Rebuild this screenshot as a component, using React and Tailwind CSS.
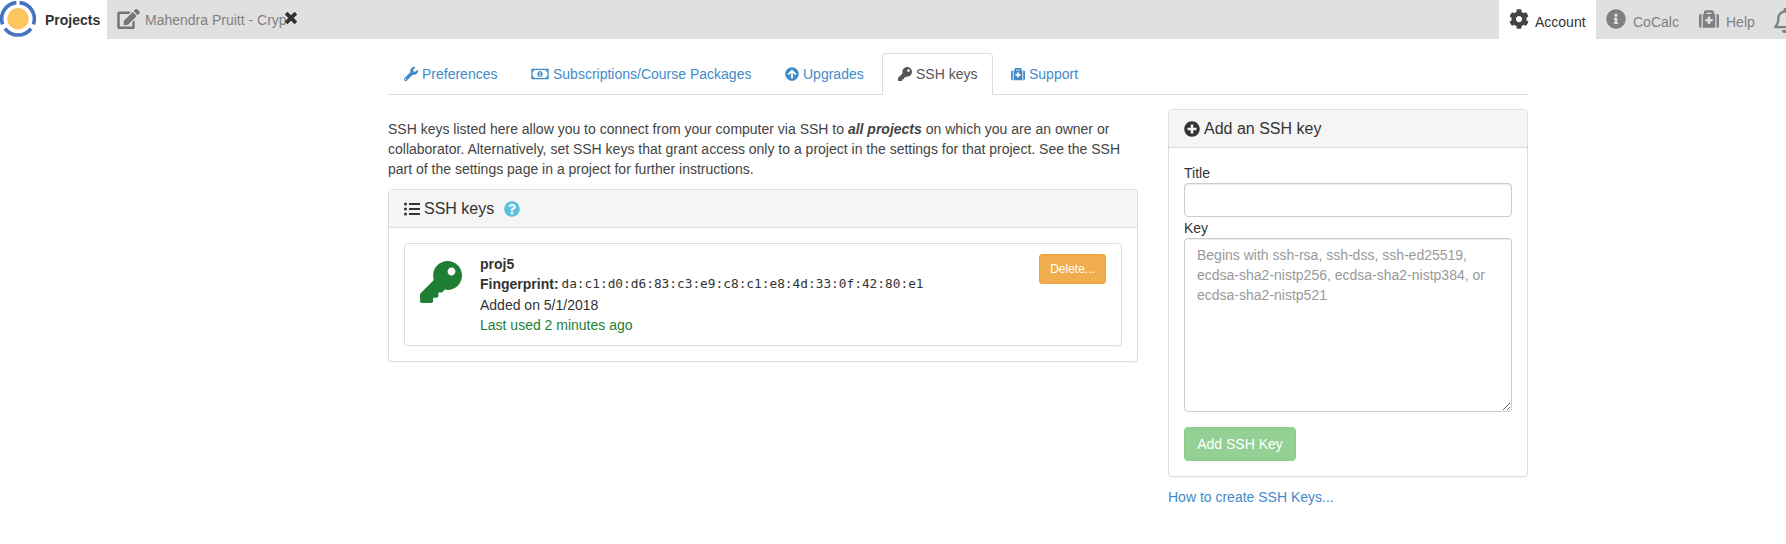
import React from "react";
import {
  FaEdit,
  FaCog,
  FaInfoCircle,
  FaMedkit,
  FaRegBell,
  FaWrench,
  FaRegMoneyBillAlt,
  FaArrowCircleUp,
  FaKey,
  FaListUl,
  FaQuestionCircle,
  FaPlusCircle,
} from "react-icons/fa";

function Logo() {
  return (
    <svg className="block h-[37px] w-9 shrink-0" viewBox="0 0 36 37">
      <circle cx="18" cy="18.8" r="10.7" fill="#fcc65f" />
      <g fill="none" stroke="#4474c0" strokeWidth="3.6">
        <path d="M2.6 24.3 A16.3 16.3 0 0 1 16.4 2.6" />
        <path d="M19.6 2.6 A16.3 16.3 0 0 1 33.4 24.3" />
        <path d="M5 28.6 A16.3 16.3 0 0 0 31 28.6" />
      </g>
    </svg>
  );
}

function CloseIcon() {
  return (
    <svg className="-ml-px mt-3 block h-3 w-3 shrink-0 self-start fill-[#333]" viewBox="0 64 384 384">
      <path d="M323.1 441l53.9-53.9c9.4-9.4 9.4-24.5 0-33.9L279.8 256l97.2-97.2c9.4-9.4 9.4-24.5 0-33.9L323.1 71c-9.4-9.4-24.5-9.4-33.9 0L192 168.2 94.8 71c-9.4-9.4-24.5-9.4-33.9 0L7 124.9c-9.4 9.4-9.4 24.5 0 33.9l97.2 97.2L7 353.2c-9.4 9.4-9.4 24.5 0 33.9L60.9 441c9.4 9.4 24.5 9.4 33.9 0l97.2-97.2 97.2 97.2c9.3 9.3 24.5 9.3 33.9 0z" />
    </svg>
  );
}

function TopBar() {
  return (
    <header className="flex h-[39px] overflow-hidden bg-[#e0e0e0] text-[#808080]">
      <div className="flex w-[107px] shrink-0 bg-white">
        <Logo />
        <span className="ml-[9px] mt-[10px] font-bold text-[#333]">Projects</span>
      </div>
      <div className="flex flex-1">
        <FaEdit className="ml-[10px] mt-[9px] h-5 w-[23px] text-[#757575]" />
        <span className="ml-[5px] mt-[10px] w-[141px] overflow-hidden whitespace-nowrap">Mahendra Pruitt - Cryp</span>
        <CloseIcon />
      </div>
      <nav className="flex w-[287px] shrink-0 whitespace-nowrap">
        <div className="flex w-[97px] shrink-0 bg-white text-[#333]">
          <FaCog className="ml-[10px] mt-[9px] h-5 w-5 text-[#444]" />
          <span className="ml-[6px] mt-3">Account</span>
        </div>
        <div className="flex w-[93px] shrink-0">
          <FaInfoCircle className="ml-[10px] mt-[9px] h-5 w-5" />
          <span className="ml-[7px] mt-3">CoCalc</span>
        </div>
        <div className="flex w-[76px] shrink-0">
          <FaMedkit className="ml-[10px] mt-[9px] h-5 w-5" />
          <span className="ml-[7px] mt-3">Help</span>
        </div>
        <FaRegBell className="ml-[9px] mt-2 h-[25px] w-[22px] shrink-0" />
      </nav>
    </header>
  );
}

const tabBase = "flex h-[42px] items-start gap-1 px-4 pt-[11px] mr-0.5 whitespace-nowrap";

function Tabs() {
  return (
    <nav className="flex h-[42px] text-[#428bca] shadow-[inset_0_-1px_0_#ddd]">
      <a className={`${tabBase} w-[125px]`}>
        <FaWrench className="mt-[3px] h-[14px] w-[14px] shrink-0" />
        Preferences
      </a>
      <a className={`${tabBase} w-[252px]`}>
        <FaRegMoneyBillAlt className="mt-[3px] h-[14px] w-[18px] shrink-0" />
        Subscriptions/Course Packages
      </a>
      <a className={`${tabBase} w-[111px]`}>
        <FaArrowCircleUp className="mt-[3px] h-[14px] w-[14px] shrink-0" />
        Upgrades
      </a>
      <a className="mr-0.5 flex h-[42px] w-[111px] items-start gap-1 whitespace-nowrap rounded-t border border-b-0 border-[#ddd] bg-white px-[15px] pt-[10px] text-[#555]">
        <FaKey className="mt-[3px] h-[14px] w-[14px] shrink-0" />
        SSH keys
      </a>
      <a className={tabBase}>
        <FaMedkit className="mt-[3px] h-[14px] w-[14px] shrink-0" />
        Support
      </a>
    </nav>
  );
}

function Panel({ heading, children }) {
  return (
    <section className="rounded border border-[#ddd] bg-white shadow-[0_1px_1px_rgba(0,0,0,0.05)]">
      <h3 className="flex h-[38px] items-center rounded-t-[3px] border-b border-[#ddd] bg-[#f5f5f5] px-[15px] text-[16px] text-[#333]">
        {heading}
      </h3>
      {children}
    </section>
  );
}

function KeyCard() {
  return (
    <div className="flex h-[103px] rounded border border-[#ddd] pl-[15px] pr-[15px] shadow-[0_1px_1px_rgba(0,0,0,0.05)]">
      <FaKey className="mt-[17px] h-[42px] w-[42px] text-[#1e7e34]" />
      <div className="ml-[18px] mt-[10px] flex-1">
        <div className="font-bold">proj5</div>
        <div className="flex h-5 whitespace-pre">
          <b>Fingerprint: </b>
          <span className="-ml-px font-['DejaVu_Sans_Mono',monospace] text-[12.8px]">da:c1:d0:d6:83:c3:e9:c8:c1:e8:4d:33:0f:42:80:e1</span>
        </div>
        <div className="mt-px">Added on 5/1/2018</div>
        <div className="text-[#1e7e34]">Last used 2 minutes ago</div>
      </div>
      <button className="mt-[10px] h-[30px] w-[67px] rounded-[3px] border border-[#eea236] bg-[#f0ad4e] text-[12px] text-white">
        Delete...
      </button>
    </div>
  );
}

export default function App() {
  return (
    <div className="h-[544px] overflow-hidden bg-white font-['Liberation_Sans',Arial,sans-serif] text-[14px] leading-5 text-[#333]">
      <TopBar />
      <main className="ml-[388px] mt-[14px] w-[1140px]">
        <Tabs />
        <div className="mt-[14px] flex gap-[30px]">
          <div className="w-[750px]">
            <p className="mb-[10px] mt-[10px] text-[#444]">
              SSH keys listed here allow you to connect from your computer via SSH to{" "}
              <b>
                <i>all projects</i>
              </b>{" "}
              on which you are an owner or
              <br />
              collaborator. Alternatively, set SSH keys that grant access only to a project in the settings for that project. See the SSH
              <br />
              part of the settings page in a project for further instructions.
            </p>
            <Panel
              heading={
                <>
                  <FaListUl className="mr-1 h-4 w-4" />
                  SSH keys
                  <FaQuestionCircle className="ml-[10px] h-4 w-4 text-[#5bc0de]" />
                </>
              }
            >
              <div className="p-[15px]">
                <KeyCard />
              </div>
            </Panel>
          </div>
          <div className="w-[360px]">
            <Panel
              heading={
                <>
                  <FaPlusCircle className="mr-1 h-4 w-4" />
                  Add an SSH key
                </>
              }
            >
              <div className="p-[15px]">
                <label className="block h-5">Title</label>
                <input className="block h-[34px] w-full rounded border border-[#ccc] px-3 shadow-[inset_0_1px_1px_rgba(0,0,0,0.075)] outline-none" />
                <label className="block h-[21px] pt-px">Key</label>
                <textarea
                  className="block h-[174px] w-full resize rounded border border-[#ccc] px-3 py-[6px] shadow-[inset_0_1px_1px_rgba(0,0,0,0.075)] outline-none placeholder:text-[#999]"
                  placeholder="Begins with ssh-rsa, ssh-dss, ssh-ed25519, ecdsa-sha2-nistp256, ecdsa-sha2-nistp384, or ecdsa-sha2-nistp521"
                />
                <button className="mt-[15px] block h-[34px] w-[112px] rounded border border-[#4cae4c] bg-[#5cb85c] text-white opacity-65">
                  Add SSH Key
                </button>
              </div>
            </Panel>
            <a className="mt-[10px] block text-[#428bca]">How to create SSH Keys...</a>
          </div>
        </div>
      </main>
    </div>
  );
}
